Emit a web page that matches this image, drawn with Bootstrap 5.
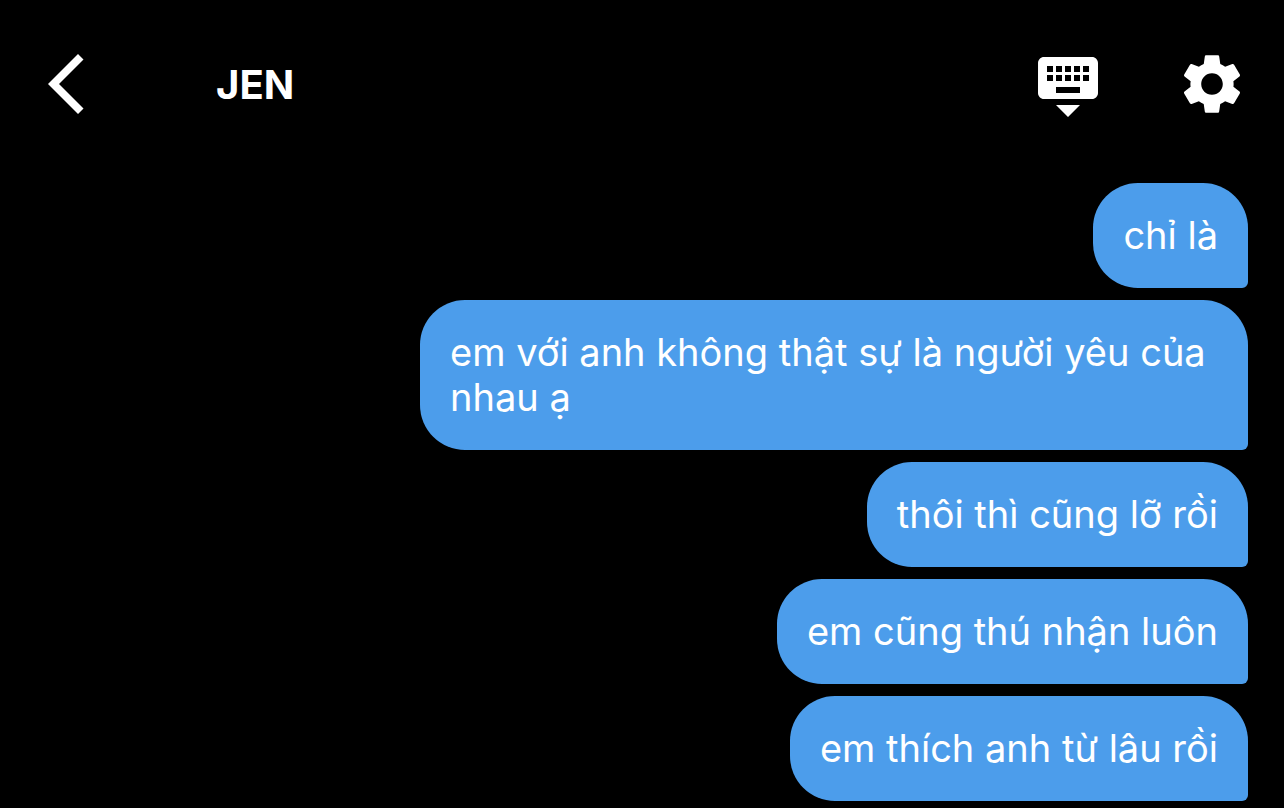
<!DOCTYPE html>
<html lang="vi">
<head>
<meta charset="utf-8">
<meta name="viewport" content="width=device-width, initial-scale=1">
<title>JEN</title>
<link href="https://cdn.jsdelivr.net/npm/bootstrap@5.3.0/dist/css/bootstrap.min.css" rel="stylesheet">
<style>
  body { background: #000; color: #fff; font-family: Inter, "Liberation Sans", sans-serif; }
  .chat-header { padding: 48px 36px; }
  .icon-btn { width: 72px; height: 72px; line-height: 0; }
  .chat-title { font-size: 40px; line-height: 48px; font-weight: 700; margin-left: 108px; padding-top: 2px; }
  .icon-gap { gap: 72px; }
  .messages { gap: 12px; padding: 15px 36px 0; }
  .bubble { background: #4c9deb; border-radius: 45px 45px 6px 45px; padding: 30px; max-width: 828px; font-size: 38px; line-height: 45px; }
</style>
</head>
<body>
<div class="vh-100 d-flex flex-column overflow-hidden">
  <header class="chat-header d-flex align-items-center flex-shrink-0">
    <button type="button" class="icon-btn btn p-0 border-0" aria-label="Back">
      <svg width="72" height="72" viewBox="0 0 72 72" fill="#fff"><path d="M42 6 L47.500 11.500 L23 36 L47.500 60.500 L42 66 L12 36 Z"/></svg>
    </button>
    <h1 class="chat-title mb-0 me-auto">JEN</h1>
    <div class="icon-gap d-flex">
      <button type="button" class="icon-btn btn p-0 border-0" aria-label="Hide keyboard">
        <svg width="72" height="72" viewBox="0 0 24 24" fill="#fff"><path d="M20 3H4c-1.100 0-1.990.900-1.990 2L2 15c0 1.100.900 2 2 2h16c1.100 0 2-.900 2-2V5c0-1.100-.900-2-2-2zm-9 3h2v2h-2V6zm0 3h2v2h-2V9zM8 6h2v2H8V6zm0 3h2v2H8V9zm-1 2H5V9h2v2zm0-3H5V6h2v2zm9 7H8v-2h8v2zm0-4h-2V9h2v2zm0-3h-2V6h2v2zm3 3h-2V9h2v2zm0-3h-2V6h2v2zm-7 15l4-4H8l4 4z"/></svg>
      </button>
      <button type="button" class="icon-btn btn p-0 border-0" aria-label="Settings">
        <svg width="72" height="72" viewBox="0 0 24 24" fill="#fff"><path d="M19.140 12.940c.040-.300.060-.610.060-.940 0-.320-.020-.640-.070-.940l2.030-1.580c.180-.140.230-.410.120-.610l-1.920-3.320c-.120-.220-.370-.290-.590-.220l-2.390.960c-.500-.380-1.030-.700-1.620-.940l-.360-2.540c-.040-.240-.240-.410-.480-.410h-3.840c-.240 0-.430.170-.470.410l-.360 2.540c-.590.240-1.130.570-1.620.940l-2.390-.960c-.220-.080-.470 0-.590.220L2.740 8.870c-.120.210-.080.470.120.610l2.030 1.580c-.050.300-.090.630-.090.940s.020.640.070.940l-2.030 1.580c-.180.140-.230.410-.120.610l1.920 3.320c.120.220.370.290.590.220l2.390-.960c.500.380 1.030.700 1.620.940l.360 2.540c.050.240.240.410.480.410h3.840c.240 0 .440-.170.470-.410l.360-2.540c.590-.240 1.130-.560 1.620-.940l2.390.960c.220.080.470 0 .590-.220l1.920-3.320c.120-.220.070-.470-.120-.610l-2.010-1.580zM12 15.600c-1.980 0-3.600-1.620-3.600-3.600s1.620-3.600 3.600-3.600 3.600 1.620 3.600 3.600-1.620 3.600-3.600 3.600z"/></svg>
      </button>
    </div>
  </header>
  <main class="messages d-flex flex-column align-items-end">
    <div class="bubble">chỉ là</div>
    <div class="bubble">em với anh không thật sự là người yêu của nhau ạ</div>
    <div class="bubble">thôi thì cũng lỡ rồi</div>
    <div class="bubble">em cũng thú nhận luôn</div>
    <div class="bubble">em thích anh từ lâu rồi</div>
  </main>
</div>
<script src="https://cdn.jsdelivr.net/npm/bootstrap@5.3.0/dist/js/bootstrap.bundle.min.js"></script>
</body>
</html>
